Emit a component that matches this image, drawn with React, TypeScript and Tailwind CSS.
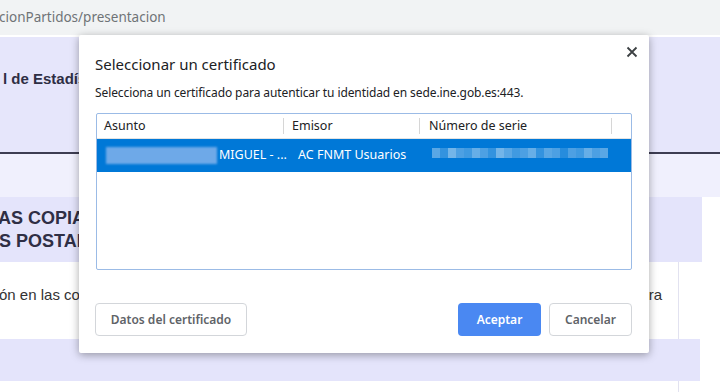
import React from "react";

const ui = { fontFamily: '"Noto Sans", "Open Sans", sans-serif' };
const arial = { fontFamily: '"Liberation Sans", Arial, sans-serif' };

function SerialBlur() {
    // pixelated serial number
    const cells = [0.35, 0.2, 0.45, 0.3, 0.25, 0.4, 0.3, 0.2, 0.45, 0.35, 0.25, 0.3, 0.4, 0.2, 0.35, 0.3, 0.15, 0.3, 0.25, 0.4, 0.3, 0.35];
    return (
        <div className="flex h-[14px] items-center">
            {cells.map((o, i) => (
                <div key={i} className="h-[10px] w-[8px] bg-white" style={{ opacity: o }} />
            ))}
        </div>
    );
}

function Dialog() {
    return (
        <div
            className="absolute left-[79px] top-[35px] flex h-[318px] w-[570px] flex-col rounded-[2px] bg-white pl-[16px] pr-[17px] shadow-[0_2px_8px_rgba(0,0,0,0.35)]"
            style={ui}
        >
            <svg width="12" height="12" viewBox="0 0 12 12" className="absolute right-[11px] top-[11px]">
                <path d="M1.5 1.5 L10.5 10.5 M10.5 1.5 L1.5 10.5" stroke="#3c4043" strokeWidth="1.8" />
            </svg>
            <div className="mt-[19px] h-[20px] text-[15px] leading-[20px] text-[#202124]">Seleccionar un certificado</div>
            <div className="mt-[10px] flex h-[18px] items-center text-[12px] tracking-[-0.1px] text-[#202124]">
                Selecciona un certificado para autenticar tu identidad en sede.ine.gob.es:443.
            </div>
            <div className="ml-[1px] mt-[11px] h-[157px] rounded-[2px] border border-[#9bbbe6] text-[12.5px] text-[#202124]">
                <div className="flex h-[25px] items-center border-b border-[#e3e3e3]">
                    <div className="flex w-[187px] items-center justify-between">
                        <span className="pl-[7px]">Asunto</span>
                        <span className="h-[16px] w-px bg-[#d6d6d6]" />
                    </div>
                    <div className="flex w-[136px] items-center justify-between">
                        <span className="pl-[8px]">Emisor</span>
                        <span className="h-[16px] w-px bg-[#d6d6d6]" />
                    </div>
                    <div className="flex w-[192px] items-center justify-between">
                        <span className="pl-[9px]">Número de serie</span>
                        <span className="h-[16px] w-px bg-[#d6d6d6]" />
                    </div>
                </div>
                <div className="flex h-[33px] items-center bg-[#0078d7] text-white">
                    <div className="flex w-[201px] items-center">
                        <div className="ml-[9px] h-[17px] w-[111px] bg-[#6ea9e8] blur-[1px]" />
                        <span className="ml-[2px]">MIGUEL - ...</span>
                    </div>
                    <span className="w-[134px]">AC FNMT Usuarios</span>
                    <div className="-mt-[6px]">
                        <SerialBlur />
                    </div>
                </div>
            </div>
            <div className="mt-[33px] flex h-[33px] items-center justify-between text-[12px] font-semibold">
                <button className="h-[33px] w-[152px] rounded-[4px] border border-[#d3d6da] text-[#606368]">Datos del certificado</button>
                <div className="flex gap-[8px]">
                    <button className="h-[33px] w-[83px] rounded-[4px] bg-[#4a88f2] text-white">Aceptar</button>
                    <button className="h-[33px] w-[83px] rounded-[4px] border border-[#d3d6da] text-[#606368]">Cancelar</button>
                </div>
            </div>
        </div>
    );
}

export default function App() {
    return (
        <div className="relative h-[392px] w-[720px] overflow-hidden bg-white">
            <div className="flex h-[35px] items-center bg-[#f1f3f4] text-[13.5px] text-[#6f7377]" style={ui}>
                <span className="ml-[-1px]">cionPartidos/presentacion</span>
            </div>
            <div className="h-[2px] bg-white" />
            <div className="flex h-[115px] items-center bg-[#e6e6fb] text-[15px] font-bold text-[#2e2e44]" style={arial}>
                <span className="ml-[3px] mt-[-30px]">l de Estadística</span>
            </div>
            <div className="h-[2px] bg-[#3d3d52]" />
            <div className="h-[43px] bg-[#f0f0fd]" />
            <div className="flex h-[65px] w-[702px] flex-col justify-center bg-[#e4e4fb] text-[18px] font-bold leading-[23px] text-[#2f2f45]" style={arial}>
                <span className="ml-[-2px]">AS COPIAS</span>
                <span className="ml-[-1px]">S POSTALES</span>
            </div>
            <div className="flex">
                <div className="flex h-[77px] w-[678px] items-center justify-between text-[15px] text-[#333333]" style={arial}>
                    <span className="ml-[-1px] mt-[-10px]">ón en las comunicaciones</span>
                    <span className="mr-[16px] mt-[-10px]">ra</span>
                </div>
                <div className="h-[77px] w-px bg-[#e2e2f0]" />
            </div>
            <div className="h-[42px] w-[700px] bg-[#e4e4fb]" />
            <div className="flex h-[20px]">
                <div className="w-[678px]" />
                <div className="w-px bg-[#e2e2f0]" />
            </div>
            <Dialog />
        </div>
    );
}
